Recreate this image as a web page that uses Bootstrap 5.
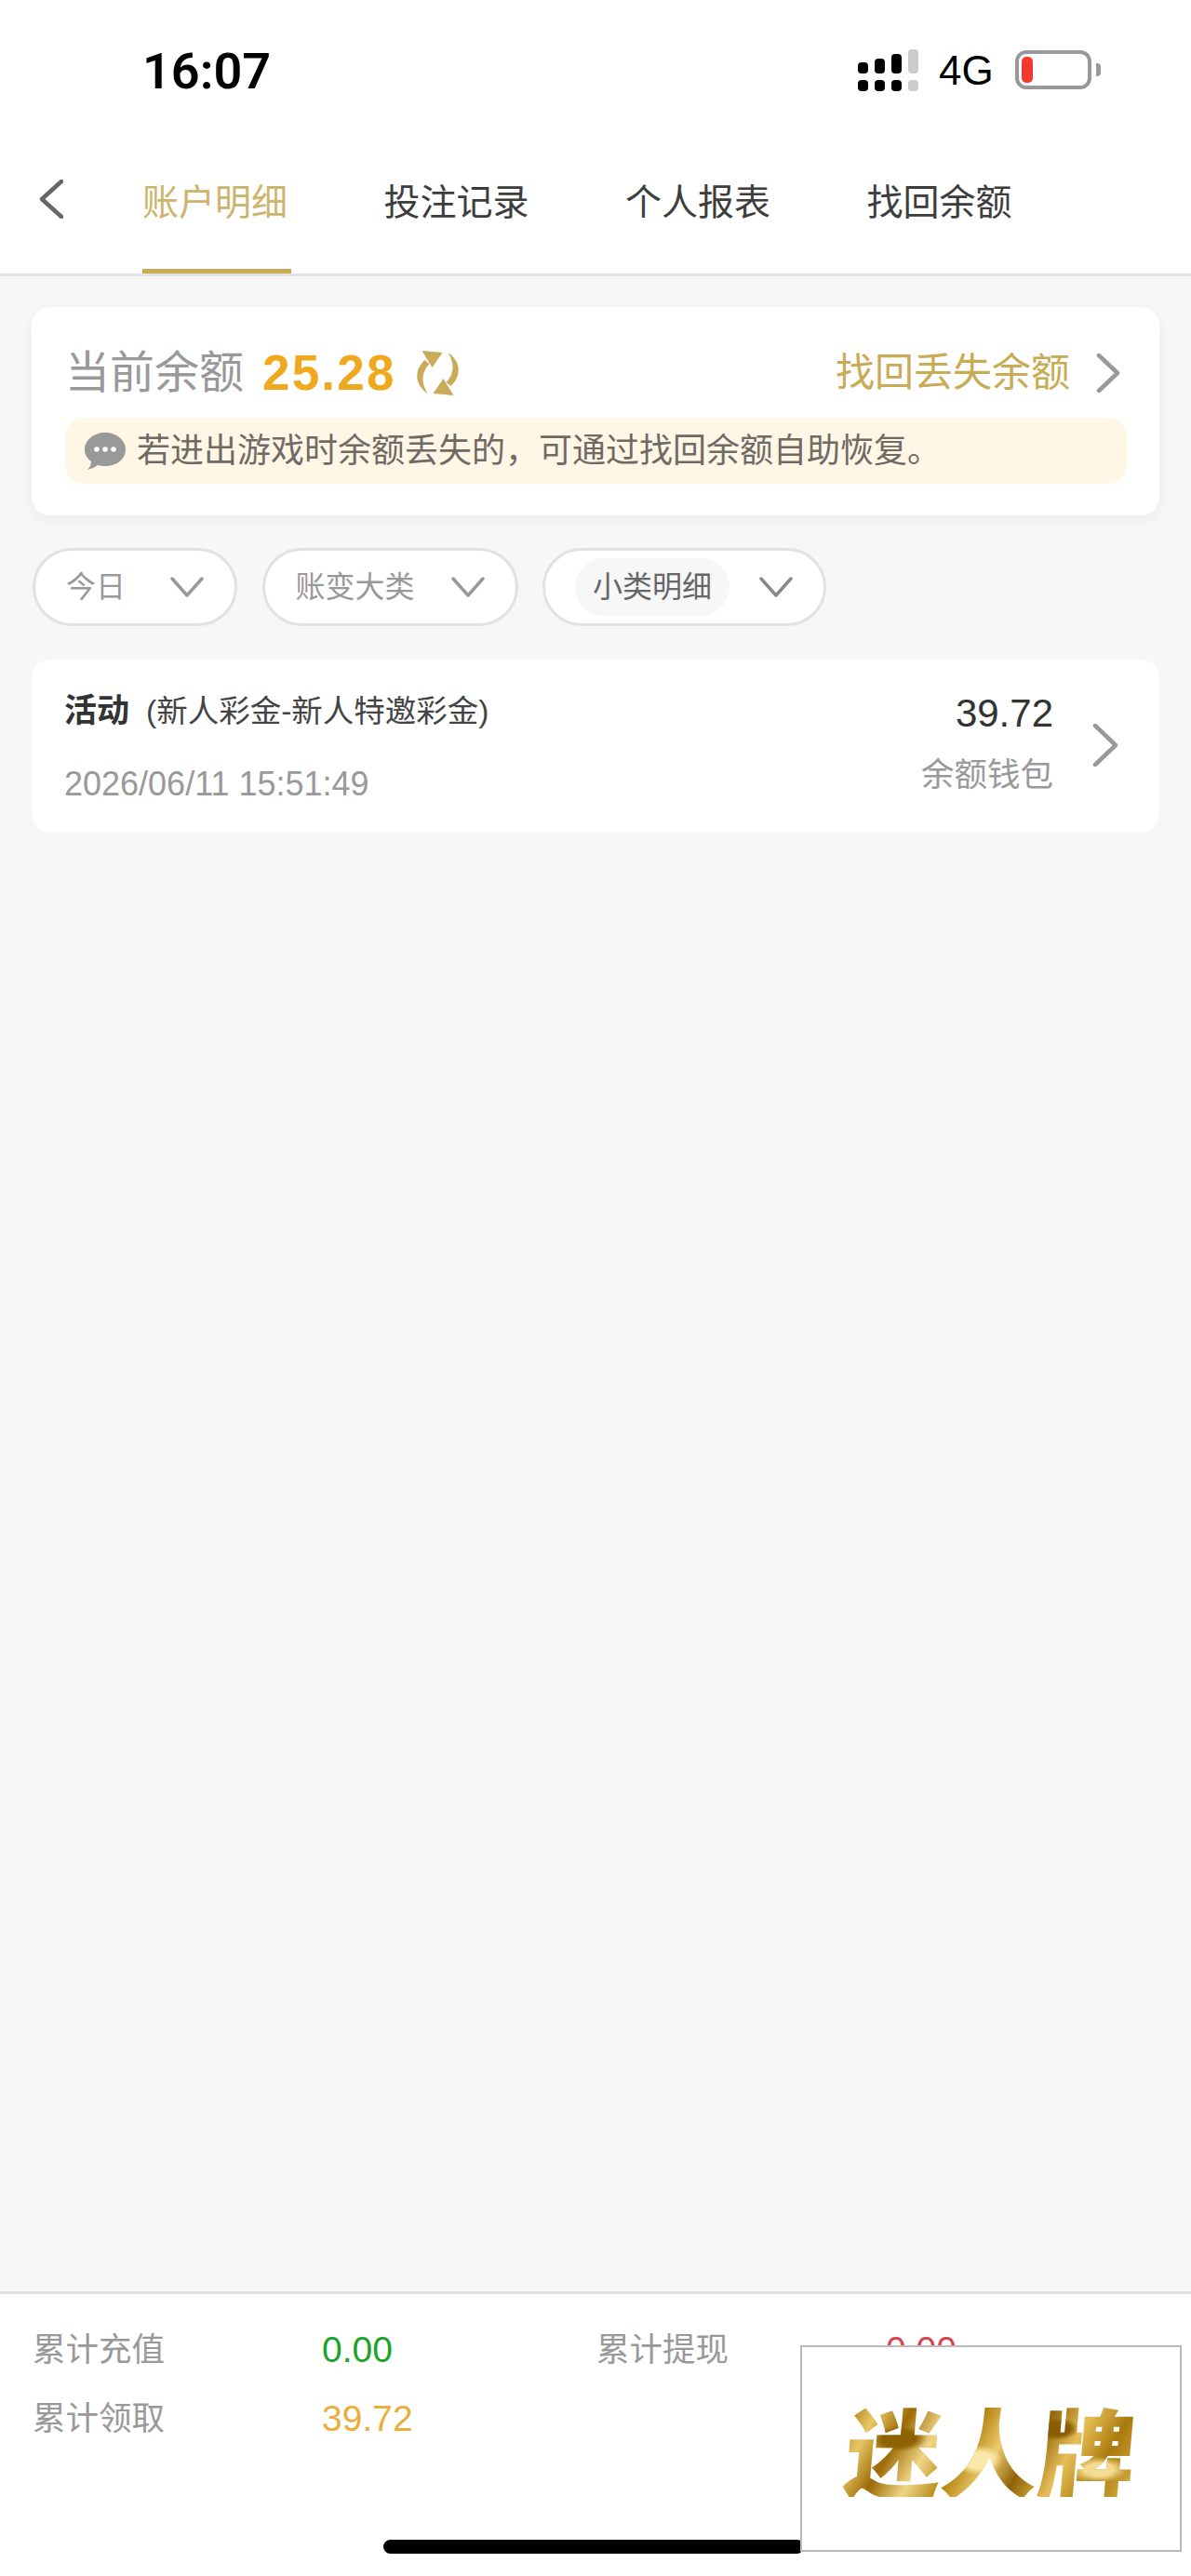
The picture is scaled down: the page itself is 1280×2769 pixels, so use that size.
<!DOCTYPE html>
<html lang="zh-CN">
<head>
    <meta charset="UTF-8" />
    <title>账户明细</title>
    <link href="https://cdn.jsdelivr.net/npm/bootstrap@5.3.0/dist/css/bootstrap.min.css" rel="stylesheet" />
    <style>
        body { font-family: "Liberation Sans", "Noto Sans CJK SC", sans-serif; background: #f7f7f7; color: #333; }
        .app-shell { position: relative; width: 1280px; height: 2769px; overflow: hidden; }

        /* status bar */
        .status-strip { height: 150px; padding: 46px 0 0 153px; }
        .clock { font-family: Roboto, "Liberation Sans", sans-serif; font-size: 54px; line-height: 62px; font-weight: 600; color: #000; width: 769px; }
        .signal { display: grid; grid-template-columns: repeat(4, 11px); grid-template-rows: 26px 12px; column-gap: 7px; row-gap: 7px; align-items: end; width: 65px; margin-top: 7px; }
        .signal i { display: block; background: #000; border-radius: 4px; }
        .signal .off { background: #ccc; }
        .net { font-size: 44px; line-height: 50px; color: #000; margin: 5px 0 0 22px; width: 82px; }
        .batt { width: 82px; height: 42px; border: 4px solid #999; border-radius: 12px; padding: 3px; margin-top: 8px; background: #fff; }
        .batt i { display: block; width: 12px; height: 100%; background: #f03a2e; border-radius: 5px; }
        .batt-nub { width: 5px; height: 14px; background: #999; border-radius: 0 4px 4px 0; margin: 22px 0 0 5px; }

        /* tabs */
        .tab-head { height: 147px; background: #fff; border-bottom: 3px solid #e3e3e3; }
        .back-btn { width: 153px; padding-left: 42px; }
        .tab-item.nav-link { width: 160px; margin-right: 99.5px; padding: 43px 0 0; height: 144px; font-size: 39px; line-height: 50px; color: #3d3d3d; white-space: nowrap; border-bottom: 5px solid transparent; border-radius: 0; }
        .tab-item.nav-link.active { color: #cdb46d; border-bottom-color: #c9ab55; }

        /* balance card */
        .page-body { padding: 33px 34px 0 34px; }
        .balance-card { height: 224px; border: 0; border-radius: 20px; box-shadow: 0 4px 14px rgba(0,0,0,.05); padding: 41px 35px 0 36px; }
        .bal-head { margin-right: 7px; }
        .bal-label { font-size: 48px; line-height: 60px; color: #999; }
        .bal-value { font-size: 53px; line-height: 60px; font-weight: 700; color: #f0a91f; letter-spacing: 2.2px; margin: 0 19px 0 20px; }
        .recover-link { font-size: 42px; line-height: 60px; color: #c9ab55; margin-right: 28px; }
        .tip-bar { height: 71px; margin-top: 18px; background: #fff6e6; border-radius: 20px; padding-left: 21px; font-size: 36px; color: #6f6a64; white-space: nowrap; }
        .tip-bar svg { margin-right: 12px; }

        /* filters */
        .filter-row { margin: 35px 0 0 1px; gap: 26.5px; }
        .filter-pill { height: 84px; background: #fff; border: 3px solid #e2e2e2; padding: 0 33px 0 33px; font-size: 32px; color: #999; }
        .filter-pill.picked { padding-left: 32px; }
        .picked-chip { background: #f7f7f7; color: #666; border-radius: 32px; padding: 0 19px; line-height: 62px; }

        /* record */
        .record-card { height: 185px; margin-top: 36px; border: 0; border-radius: 20px; padding: 30px 44px 0 35px; }
        .rec-title { font-size: 35px; line-height: 50px; font-weight: 700; color: #333; }
        .rec-sub { font-size: 33.5px; font-weight: 400; color: #444; margin-left: 18px; }
        .rec-date { font-size: 36px; line-height: 50px; color: #999; margin-top: 28px; }
        .rec-amount { font-size: 42px; line-height: 50px; color: #333; }
        .rec-wallet { font-size: 35.5px; line-height: 50px; color: #999; margin-top: 16px; }
        .rec-text { margin: 0 42px 8px 0; }
        .rec-arrow { margin-bottom: 6px; }

        /* totals */
        .totals-bar { position: absolute; left: 0; right: 0; top: 2463px; bottom: 0; background: #fff; border-top: 3px solid #e0e0e0; padding: 35px 0 0 35px; display: grid; grid-template-columns: 311px 295px 311px 1fr; grid-auto-rows: 74px; }
        .tot-label { font-size: 35.5px; line-height: 50px; color: #999; }
        .tot-value { font-size: 39px; line-height: 50px; }

        /* overlays */
        .home-bar { position: absolute; left: 412px; top: 2730px; width: 452px; height: 15px; background: #000; border-radius: 8px; }
        .brand-box { position: absolute; left: 860px; top: 2521px; width: 410px; height: 222px; background: #fff; border: 2px solid #bbb; }
        .brand-text { font-family: "Noto Sans CJK SC", sans-serif; font-size: 104px; line-height: 1; font-weight: 900; white-space: nowrap; color: transparent; transform: skewX(-5deg); background:
            radial-gradient(ellipse 30px 14px at 18% 40%, #8f6105 0 60%, transparent 100%),
            radial-gradient(ellipse 26px 16px at 46% 62%, #fbe7a8 0 55%, transparent 100%),
            radial-gradient(ellipse 24px 12px at 72% 30%, #8a5c04 0 60%, transparent 100%),
            radial-gradient(ellipse 30px 14px at 88% 72%, #f4dc92 0 50%, transparent 100%),
            linear-gradient(115deg, #a87408 0%, #e9c765 10%, #9c6a06 20%, #f0d586 31%, #b5820f 42%, #eccb71 52%, #8f6105 62%, #e6bf58 74%, #a97a0c 86%, #dcb24a 100%);
            -webkit-background-clip: text; background-clip: text; }
    </style>
</head>
<body>

<div class="app-shell">

    <div class="status-strip d-flex align-items-start bg-white">
        <div class="clock">16:07</div>
        <div class="signal">
            <i style="height: 12px"></i><i style="height: 16px"></i><i style="height: 21px"></i><i class="off" style="height: 26px"></i>
            <i style="height: 12px"></i><i style="height: 12px"></i><i style="height: 12px"></i><i class="off" style="height: 12px"></i>
        </div>
        <div class="net">4G</div>
        <div class="batt"><i></i></div>
        <div class="batt-nub"></div>
    </div>

    <div class="tab-head d-flex">
        <div class="back-btn d-flex align-items-center pb-3">
            <svg width="26" height="42" viewBox="0 0 26 42"><path d="M24 2 L3 21 L24 40" fill="none" stroke="#666" stroke-width="4.5" stroke-linecap="round" stroke-linejoin="round"/></svg>
        </div>
        <nav class="nav flex-nowrap">
            <a class="nav-link tab-item active" href="#">账户明细</a>
            <a class="nav-link tab-item" href="#">投注记录</a>
            <a class="nav-link tab-item" href="#">个人报表</a>
            <a class="nav-link tab-item" href="#">找回余额</a>
        </nav>
    </div>

    <div class="page-body">

        <div class="card balance-card">
            <div class="bal-head d-flex align-items-center">
                <span class="bal-label">当前余额</span>
                <span class="bal-value">25.28</span>
                <svg width="51" height="52" viewBox="0 0 50 52">
                    <g id="refreshHalf">
                        <path d="M11 12 C1 21 -2 37 14 48 C8 38 6 27 16 16 Z" fill="#c9ab5b"/>
                        <polygon points="8,2 30,4 19,20" fill="#c9ab5b"/>
                    </g>
                    <use href="#refreshHalf" transform="rotate(180 25 26)"/>
                </svg>
                <span class="recover-link ms-auto">找回丢失余额</span>
                <svg width="26" height="42" viewBox="0 0 26 42"><path d="M3 2 L23 21 L3 40" fill="none" stroke="#999" stroke-width="4.5" stroke-linecap="round" stroke-linejoin="round"/></svg>
            </div>
            <div class="tip-bar d-flex align-items-center">
                <svg width="44" height="40" viewBox="0 0 44 40">
                    <path d="M22 0 C34 0 44 8 44 18 C44 29 34 36 22 36 C19 36 16 35.500 14 35 C11 37 8 39 3 40 C6 37 7 34 7 31 C3 28 0 24 0 18 C0 8 10 0 22 0 Z" fill="#999"/>
                    <circle cx="13" cy="18" r="2.800" fill="#fff"/><circle cx="22" cy="18" r="2.800" fill="#fff"/><circle cx="31" cy="18" r="2.800" fill="#fff"/>
                </svg>
                <span>若进出游戏时余额丢失的&#xFF0C;可通过找回余额自助恢复。</span>
            </div>
        </div>

        <div class="filter-row d-flex">
            <div class="filter-pill rounded-pill d-flex align-items-center" style="width: 220px">
                <span>今日</span>
                <svg class="ms-auto" width="36" height="22" viewBox="0 0 36 22"><path d="M2 2 L18 20 L34 2" fill="none" stroke="#999" stroke-width="3.500" stroke-linecap="round" stroke-linejoin="round"/></svg>
            </div>
            <div class="filter-pill rounded-pill d-flex align-items-center" style="width: 275px">
                <span>账变大类</span>
                <svg class="ms-auto" width="36" height="22" viewBox="0 0 36 22"><path d="M2 2 L18 20 L34 2" fill="none" stroke="#999" stroke-width="3.500" stroke-linecap="round" stroke-linejoin="round"/></svg>
            </div>
            <div class="filter-pill picked rounded-pill d-flex align-items-center" style="width: 305px">
                <span class="picked-chip">小类明细</span>
                <svg class="ms-auto" width="36" height="22" viewBox="0 0 36 22"><path d="M2 2 L18 20 L34 2" fill="none" stroke="#888" stroke-width="3.500" stroke-linecap="round" stroke-linejoin="round"/></svg>
            </div>
        </div>

        <div class="card record-card">
            <div class="d-flex justify-content-between">
                <div>
                    <div class="rec-title">活动<span class="rec-sub">(新人彩金-新人特邀彩金)</span></div>
                    <div class="rec-date">2026/06/11 15:51:49</div>
                </div>
                <div class="d-flex align-items-center">
                    <div class="text-end rec-text">
                        <div class="rec-amount">39.72</div>
                        <div class="rec-wallet">余额钱包</div>
                    </div>
                    <svg class="rec-arrow" width="28" height="46" viewBox="0 0 28 46"><path d="M3 2 L25 23 L3 44" fill="none" stroke="#999" stroke-width="4.5" stroke-linecap="round" stroke-linejoin="round"/></svg>
                </div>
            </div>
        </div>

    </div>

    <div class="totals-bar">
        <div class="tot-label">累计充值</div>
        <div class="tot-value" style="color: #1aa32a">0.00</div>
        <div class="tot-label">累计提现</div>
        <div class="tot-value" style="color: #d9434e">0.00</div>
        <div class="tot-label">累计领取</div>
        <div class="tot-value" style="color: #e9ae3b">39.72</div>
    </div>

    <div class="home-bar"></div>

    <div class="brand-box d-flex align-items-center justify-content-center">
        <span class="brand-text">迷人牌</span>
    </div>

</div>

<script src="https://cdn.jsdelivr.net/npm/bootstrap@5.3.0/dist/js/bootstrap.bundle.min.js"></script>
</body>
</html>
